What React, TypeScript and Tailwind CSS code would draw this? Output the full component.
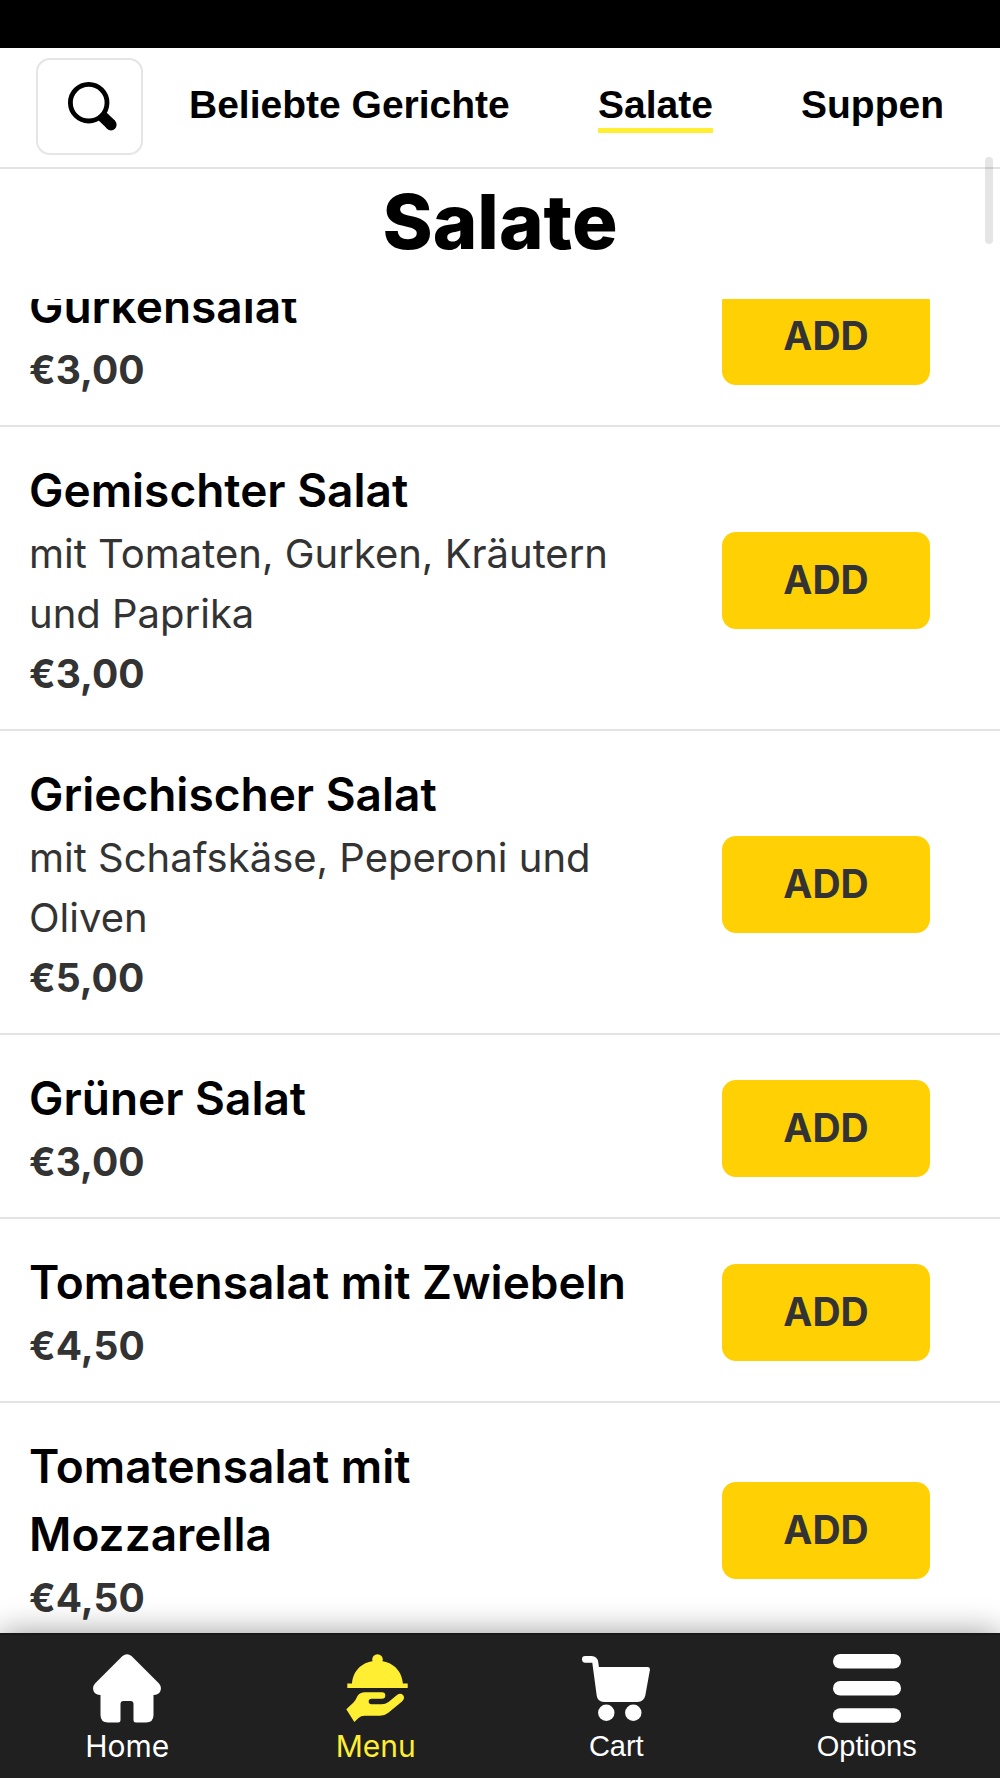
import clsx from "clsx"

const categories = ["Beliebte Gerichte", "Salate", "Suppen"]

const dishes = [
  { name: "Gurkensalat", price: "€3,00" },
  { name: "Gemischter Salat", description: "mit Tomaten, Gurken, Kräutern und Paprika", price: "€3,00" },
  { name: "Griechischer Salat", description: "mit Schafskäse, Peperoni und Oliven", price: "€5,00" },
  { name: "Grüner Salat", price: "€3,00" },
  { name: "Tomatensalat mit Zwiebeln", price: "€4,50" },
  { name: "Tomatensalat mit Mozzarella", price: "€4,50" },
]

function SearchIcon() {
  return (
    <svg viewBox="0 0 54 49" className="w-[54px] h-[49px]" fill="none" stroke="currentColor" aria-hidden="true">
      <circle cx="25.7" cy="20.7" r="18.3" strokeWidth="4.8" />
      <path d="M38 33L48.2 42.8" strokeWidth="11.3" />
      <circle cx="48" cy="42.8" r="5.6" fill="currentColor" stroke="none" />
    </svg>
  )
}

function HomeIcon() {
  return (
    <svg viewBox="0 0 68 69" className="w-[68px] h-[69px]" fill="currentColor" aria-hidden="true">
      <path d="M29.5 2Q34-1.6 38.5 2L66 29.5Q69 33 67.3 37.2Q65.5 41 60.5 41V61Q60.5 68.5 53 68.5H43Q40.5 68.5 40.5 66V50Q40.5 47 37.5 47H30.5Q27.5 47 27.5 50V66Q27.5 68.5 25 68.5H15Q7.5 68.5 7.5 61V41Q2.5 41 .7 37.2Q-1 33 2 29.5Z" />
    </svg>
  )
}

function MenuIcon() {
  return (
    <svg viewBox="0 0 68 69" className="w-[68px] h-[69px]" fill="currentColor" aria-hidden="true">
      <circle cx="35.5" cy="5.6" r="5.3" />
      <path d="M10 29.5C11 16 21 6.7 35.4 6.7S60 16 60.9 29.5H65.7V34H5.3V29.5Z" />
      <path d="M4.3 55.3L12.3 68L16.5 64Q19 61.8 22.5 61.8H38Q42.5 61.8 46 59L60 47.5Q63.5 44 61 41Q58.5 38.3 55 41L46.5 48Q43.5 50.3 39.5 50.3H29.5Q26.7 50.3 26.7 47.5T29.5 44.7H40Q43.3 44.7 43.3 41.5T40 38.3H23Q18 38.3 15.5 42Q13.5 46.5 11.5 48.5Z" />
    </svg>
  )
}

function CartIcon() {
  return (
    <svg viewBox="0 0 68 69" className="w-[68px] h-[69px]" fill="currentColor" aria-hidden="true">
      <path d="M3.3 2H9.5Q15.5 2 16.3 8.5L16.9 13H65.5Q68.3 13 67.9 16L63.3 41.5Q61.8 48 55.5 48H22Q15.5 48 14.7 41.5L10.3 8.7H3.3Q0 8.7 0 5.3T3.3 2Z" />
      <circle cx="24.3" cy="58.7" r="8.2" />
      <circle cx="51.3" cy="58.7" r="8.2" />
    </svg>
  )
}

function OptionsIcon() {
  return (
    <svg viewBox="0 0 68 69" className="w-[68px] h-[69px]" fill="currentColor" aria-hidden="true">
      <rect width="68" height="14.5" rx="7.2" />
      <rect y="27" width="68" height="14.5" rx="7.2" />
      <rect y="54.2" width="68" height="14.5" rx="7.2" />
    </svg>
  )
}

const navItems = [
  { label: "Home", Icon: HomeIcon, font: "font-['Inter'] text-[30px]" },
  { label: "Menu", Icon: MenuIcon, font: "font-['Inter'] text-[30px]", active: true },
  { label: "Cart", Icon: CartIcon, font: "font-['Liberation_Sans'] text-[29px]" },
  { label: "Options", Icon: OptionsIcon, font: "font-['Liberation_Sans'] text-[29px]" },
]

export default function App() {
  return (
    <div className="relative flex h-screen flex-col overflow-hidden bg-white font-['Inter',sans-serif] text-black">
      <div className="h-12 shrink-0 bg-black" />

      <header className="flex shrink-0 items-start gap-[46px] overflow-hidden border-b-2 border-[#e3e3e3] pt-[10px] pr-14 pb-3 pl-9">
        <button
          type="button"
          aria-label="Suche"
          className="flex h-[97px] w-[107px] shrink-0 items-center justify-center rounded-[14px] border-2 border-[#e5e5e5]"
        >
          <SearchIcon />
        </button>
        <nav className="flex flex-1 justify-between pt-6 font-['Liberation_Sans',sans-serif] text-[39px] leading-[46px] font-bold whitespace-nowrap">
          {categories.map((category) => (
            <a
              key={category}
              href="#"
              className={clsx("border-b-[5px]", category === "Salate" ? "border-[#ffee32]" : "border-transparent")}
            >
              {category}
            </a>
          ))}
        </nav>
      </header>

      <main className="min-h-0 flex-1 overflow-hidden">
        <h1 className="relative z-10 bg-white pt-1 pb-[30px] text-center text-[76px] leading-24 font-extrabold">Salate</h1>
        {/* list is scrolled under the heading */}
        <ul className="-mt-14">
          {dishes.map((dish) => (
            <li
              key={dish.name}
              className="flex items-center justify-between border-b-2 border-[#e3e3e3] pt-[29px] pr-[70px] pb-[25px] pl-[29px]"
            >
              <div className="w-[620px]">
                <h2 className="text-[46px] leading-[68px] font-semibold">{dish.name}</h2>
                {dish.description && <p className="text-[40px] leading-[60px] text-[#333]">{dish.description}</p>}
                <p className="text-[39px] leading-[60px] font-bold text-[#333]">{dish.price}</p>
              </div>
              <button
                type="button"
                className="h-[97px] w-52 shrink-0 rounded-[14px] bg-[#ffd004] text-[39px] font-bold text-[#333]"
              >
                ADD
              </button>
            </li>
          ))}
        </ul>
      </main>

      <nav className="relative z-20 flex shrink-0 justify-around border-t-2 border-[#181818] bg-[#202020] pt-[19px] pb-3 pl-0.5 shadow-[0_0_30px_rgba(0,0,0,0.4)]">
        {navItems.map(({ label, Icon, font, active }) => (
          <a
            key={label}
            href="#"
            className={clsx("flex flex-col items-center gap-[3px] leading-10", font, active ? "text-[#ffee32]" : "text-white")}
          >
            <Icon />
            <span className="leading-10">{label}</span>
          </a>
        ))}
      </nav>

      {/* scroll thumb */}
      <div className="absolute top-[157px] right-[7px] z-30 h-[87px] w-2 rounded-full bg-black/10" />
    </div>
  )
}
